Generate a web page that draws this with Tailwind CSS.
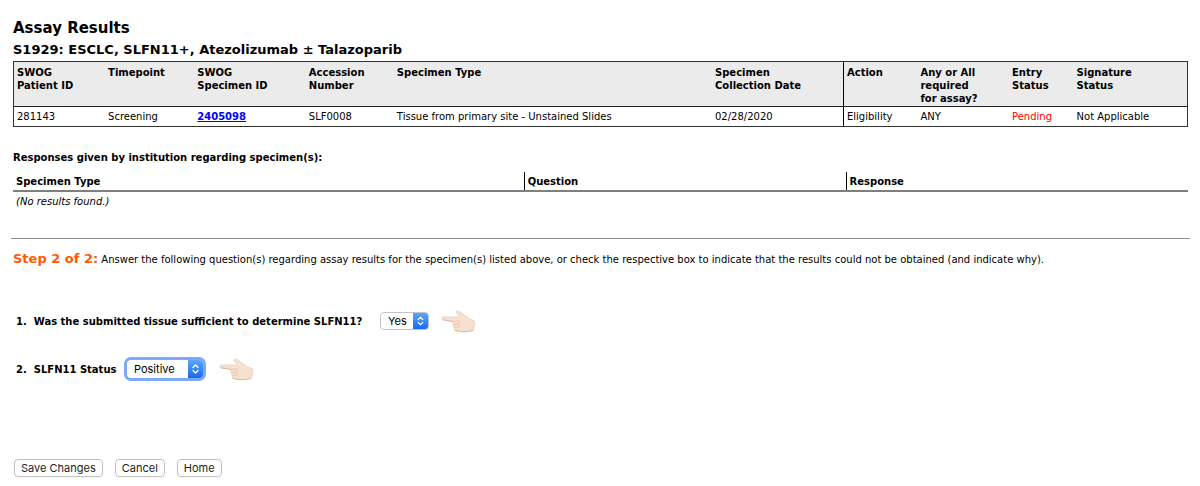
<!DOCTYPE html>
<html lang="en">
<head>
<meta charset="utf-8">
<title>Assay Results</title>
<script src="https://cdn.jsdelivr.net/npm/@tailwindcss/browser@4"></script>
</head>
<body class="bg-white pt-5 pr-[10px] pb-2 pl-3 font-['DejaVu_Sans',Verdana,sans-serif] text-[10px] leading-[13px] text-black">
<svg class="hidden" aria-hidden="true">
  <symbol id="hand" viewBox="0 0 34 23">
    <path d="M1.800 7C.4 7.200.4 9.600 1.900 9.900L12 11.400C11.500 12.500 11.800 13.500 12.600 14.100C11.800 15.300 12.200 16.700 13.300 17.200C12.700 18.700 13.500 20.200 15 20.500C18.500 21.500 23 22 26.500 21.600C28.500 21.300 30 20.700 32 20.500C33.800 17.500 34 13 33 10.300C30.500 10.300 28.500 8.900 26 7.100C23.500 5.300 21.200 3.200 18.200 1.600C16.600.700 14.800.800 14.800 2C14.800 3.300 17 4.500 17.800 6.300L17 7Z" fill="#f8e0cf" stroke="#e6c6b0" stroke-width=".6" stroke-linejoin="round"/>
    <path d="M1.900 9.900L12 11.400M14 20.400C18.500 21.500 23 22 26.500 21.600C28.500 21.300 30 20.700 32 20.500" fill="none" stroke="#d8aa8e" stroke-width=".7" stroke-linecap="round"/>
    <path d="M12.600 14.100C14.400 14.600 16 14.500 17.300 13.900M13.300 17.200C15 17.700 16.500 17.500 17.800 16.900M12 11.400C14.500 11.500 16.200 11 17.500 10.400C18.900 11.300 18.600 13 17.300 13.900C18.700 14.700 18.800 16.100 17.800 16.900" fill="none" stroke="#e3bda4" stroke-width=".7" stroke-linecap="round"/>
  </symbol>
  <symbol id="chevrons" viewBox="0 0 15 17">
    <path d="M5 7L7.500 4.500L10 7M5 10L7.500 12.500L10 10" fill="none" stroke="#fff" stroke-width="1.300" stroke-linecap="round" stroke-linejoin="round"/>
  </symbol>
</svg>
<main>
  <header class="pl-px">
    <h1 class="text-[15px] leading-4 font-bold">Assay Results</h1>
    <h2 class="mt-1.5 text-[13px] leading-4 font-bold">S1929: ESCLC, SLFN11+, Atezolizumab ± Talazoparib</h2>
  </header>
  <div class="pr-0.5 pl-px">
    <table class="mt-[3px] w-full table-fixed border-collapse border border-[#333] text-left">
      <colgroup>
        <col class="w-[7.8%]"><col class="w-[7.6%]"><col class="w-[9.5%]"><col class="w-[7.5%]"><col class="w-[27.1%]"><col class="w-[11.2%]"><col class="w-[6.3%]"><col class="w-[7.8%]"><col class="w-[5.5%]"><col class="w-[9.7%]">
      </colgroup>
      <thead>
        <tr class="h-[45px] border-b border-[#222] bg-[#ebebeb] align-top [&>th]:px-[3px] [&>th]:pt-1 [&>th]:font-bold">
          <th scope="col">SWOG<br>Patient ID</th>
          <th scope="col">Timepoint</th>
          <th scope="col">SWOG<br>Specimen ID</th>
          <th scope="col">Accession<br>Number</th>
          <th scope="col">Specimen Type</th>
          <th scope="col" class="whitespace-nowrap">Specimen<br>Collection Date</th>
          <th scope="col" class="border-l border-black">Action</th>
          <th scope="col">Any or All<br>required<br>for assay?</th>
          <th scope="col">Entry<br>Status</th>
          <th scope="col">Signature<br>Status</th>
        </tr>
      </thead>
      <tbody>
        <tr class="h-5 [&>td]:px-[3px]">
          <td>281143</td>
          <td>Screening</td>
          <td><a href="#" class="font-bold text-[#0000ff] underline">2405098</a></td>
          <td>SLF0008</td>
          <td>Tissue from primary site - Unstained Slides</td>
          <td>02/28/2020</td>
          <td class="border-l border-black">Eligibility</td>
          <td>ANY</td>
          <td class="text-[#ff0000]">Pending</td>
          <td>Not Applicable</td>
        </tr>
      </tbody>
    </table>
  </div>
  <section class="pr-0.5 pl-px">
    <h3 class="mt-6 font-bold">Responses given by institution regarding specimen(s):</h3>
    <table class="mt-2 w-full table-fixed border-collapse text-left">
      <colgroup><col class="w-[43.5%]"><col class="w-[27.4%]"><col></colgroup>
      <thead>
        <tr class="h-[19px] border-b-2 border-[#7f7f7f] [&>th]:px-[3px] [&>th]:font-bold">
          <th scope="col">Specimen Type</th>
          <th scope="col" class="border-l border-black">Question</th>
          <th scope="col" class="border-l border-black">Response</th>
        </tr>
      </thead>
      <tbody>
        <tr class="h-5"><td colspan="3" class="px-[3px] italic">(No results found.)</td></tr>
      </tbody>
    </table>
  </section>
  <hr class="mt-[27px] -ml-px border-[#8f8f8f]">
  <p class="mt-3 pl-px leading-4"><strong class="text-[13px] text-[#ff5a00]">Step 2 of 2:</strong> Answer the following question(s) regarding assay results for the specimen(s) listed above, or check the respective box to indicate that the results could not be obtained (and indicate why).</p>
  <form>
    <div class="mt-[41px] flex h-6 items-center pl-1">
      <label for="tissue" class="w-[356px] font-bold">1.&nbsp; Was the submitted tissue sufficient to determine SLFN11?</label>
      <div class="ml-2 grid h-[18px] w-[49px] grid-cols-[1fr_15px] overflow-hidden rounded-[4px] border border-[#c4c4c4]">
        <select id="tissue" class="col-span-full row-start-1 appearance-none pl-[7px] font-['Inter',sans-serif] text-[11px] leading-4 outline-none"><option>Yes</option><option>No</option></select>
        <svg class="pointer-events-none col-start-2 row-start-1 h-full w-[15px] bg-linear-to-b from-[#5ba5fb] to-[#1669f5]" aria-hidden="true"><use href="#chevrons"/></svg>
      </div>
      <svg class="ml-3 h-[23px] w-[34px]" aria-hidden="true"><use href="#hand"/></svg>
    </div>
    <div class="mt-6 flex h-6 items-center pl-1">
      <label for="status" class="w-[103px] font-bold">2.&nbsp; SLFN11 Status</label>
      <div class="ml-2 grid h-[18px] w-[76px] grid-cols-[1fr_15px] overflow-hidden rounded-[4px] ring-3 ring-[#7baaf7]">
        <select id="status" class="col-span-full row-start-1 appearance-none pl-[7px] font-['Inter',sans-serif] text-[11px] leading-4 outline-none"><option>Positive</option><option>Negative</option></select>
        <svg class="pointer-events-none col-start-2 row-start-1 h-full w-[15px] bg-linear-to-b from-[#5ba5fb] to-[#1669f5]" aria-hidden="true"><use href="#chevrons"/></svg>
      </div>
      <svg class="ml-4 h-[23px] w-[34px]" aria-hidden="true"><use href="#hand"/></svg>
    </div>
    <div class="mt-[78px] flex gap-3 pl-0.5 font-['Inter',sans-serif] text-[11px] leading-4 text-[#222] [&>button]:rounded-[4px] [&>button]:border [&>button]:border-[#c2c2c2] [&>button]:px-1.5 [&>button]:shadow-xs">
      <button type="button">Save Changes</button>
      <button type="button">Cancel</button>
      <button type="button">Home</button>
    </div>
  </form>
</main>
</body>
</html>
